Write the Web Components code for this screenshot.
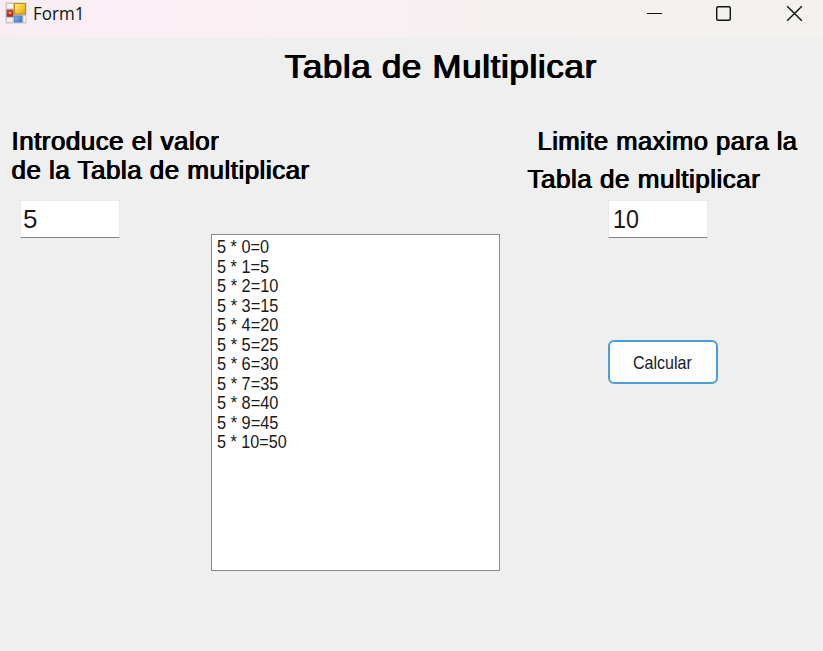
<!DOCTYPE html>
<html lang="es">
<head>
<meta charset="utf-8">
<title>Form1</title>
<style>
html,body{margin:0;height:100%;overflow:hidden;background:#efefef}
</style>
</head>
<body>
<form-window></form-window>
<script>
// One line of text, scaled horizontally to the width given in "w".
class FitText extends HTMLElement{
  connectedCallback(){
    const r=this.attachShadow({mode:'open'});
    r.innerHTML=`<style>:host{display:block;white-space:nowrap}span{display:inline-block;transform-origin:0 0}</style><span><slot></slot></span>`;
    const s=r.querySelector('span');
    const w=+this.getAttribute('w');
    this.style.width=w+'px';
    s.style.transform=`scaleX(${w/s.offsetWidth})`;
  }
}
class TitleBar extends HTMLElement{
  connectedCallback(){
    this.attachShadow({mode:'open'}).innerHTML=`<style>
:host{display:flex;height:38px;background:linear-gradient(90deg,#f7eef4 0%,#faeff4 20%,#f8f0f3 45%,#f4f1ef 75%,#f3f2ee 100%);font:18px/26px "Open Sans","Noto Sans",sans-serif;color:#111}
.icon{width:22px;height:22px;margin:2px 0 0 5px}
fit-text{margin:0 0 0 6px}
.controls{margin-left:auto;width:176px;height:27px}
</style>
<svg class="icon" viewBox="0 0 22 22">
<defs><linearGradient id="y" x1="0" y1="0" x2="1" y2="1"><stop offset="0" stop-color="#fff0a0"/><stop offset=".5" stop-color="#f8ca32"/><stop offset="1" stop-color="#dfa40c"/></linearGradient>
<linearGradient id="r" x1="0" y1="0" x2="0" y2="1"><stop offset="0" stop-color="#d9523f"/><stop offset="1" stop-color="#b01f16"/></linearGradient>
<linearGradient id="b" x1="0" y1="0" x2="1" y2="1"><stop offset="0" stop-color="#80b4f8"/><stop offset="1" stop-color="#3173d4"/></linearGradient></defs>
<rect x=".5" y=".5" width="21" height="21" rx="1" fill="#c6c5c8"/>
<rect x="2" y="2" width="6" height="4.5" fill="#f5f5f6"/><rect x="2" y="16" width="5.5" height="4" fill="#f5f5f6"/><rect x="18.5" y="14" width="2" height="6" fill="#f5f5f6"/>
<rect x="9.5" y="1.5" width="11" height="10.5" fill="url(#y)" stroke="#b98c18"/>
<rect x="2" y="8" width="6" height="6.5" fill="url(#r)" stroke="#a83a30" stroke-width=".8"/><rect x="4" y="10" width="2" height="2" fill="#f0a79d"/>
<rect x="9.5" y="14" width="7.5" height="6" fill="url(#b)" stroke="#4779bd" stroke-width=".8"/>
</svg>
<fit-text w="51">Form1</fit-text>
<svg class="controls" viewBox="647 0 176 27" fill="none" stroke="#111" stroke-width="1.4">
<path d="M647 13.5H662" stroke-width="1"/>
<rect x="716.7" y="6.7" width="13.6" height="13.6" rx="1.5"/>
<path d="M787.2 6.2L801.8 20.8M801.8 6.2L787.2 20.8"/>
</svg>`;
  }
}
class FormLabel extends HTMLElement{
  connectedCallback(){
    this.attachShadow({mode:'open'}).innerHTML=`<style>
:host{display:flex;flex-direction:column;font:25px/29px "Liberation Sans",Arial,sans-serif;letter-spacing:.5px;color:#000;text-shadow:1px 0 0 #000,.5px 0 0 #000}
</style><slot></slot>`;
  }
}
class TextField extends HTMLElement{
  connectedCallback(){
    this.attachShadow({mode:'open'}).innerHTML=`<style>
:host{display:block;box-sizing:border-box;width:100px;height:38px;background:#fff;border:1px solid #e9e9e9;border-bottom:1.5px solid #858585;border-radius:1px;padding:3px 0 0 2px;font:26px/30px "Liberation Sans",Arial,sans-serif;color:#1a1a1a}
</style><slot></slot>`;
  }
}
class ListBox extends HTMLElement{
  connectedCallback(){
    const n=+this.getAttribute('base'),max=+this.getAttribute('max');
    let rows='';
    for(let i=0;i<=max;i++){
      const w=n*i>9?(i>9?70:61):52;
      rows+=`<fit-text w="${w}">${n} * ${i}=${n*i}</fit-text>`;
    }
    this.attachShadow({mode:'open'}).innerHTML=`<style>
:host{display:block;box-sizing:border-box;width:289px;height:337px;border:1.5px solid #858a91;background:#fff;padding:2px 0 0 4.6px;font:18.5px/19.5px "Liberation Sans",Arial,sans-serif;color:#1a1a1a}
fit-text{height:19.5px}
</style>${rows}`;
  }
}
class PushButton extends HTMLElement{
  connectedCallback(){
    this.attachShadow({mode:'open'}).innerHTML=`<style>
:host{display:block}
button{display:flex;align-items:center;justify-content:center;box-sizing:border-box;width:110px;height:44px;margin:0;padding:1px 2px 0 0;border:2px solid #4a9ede;border-radius:6px;background:#fdfdfd;font:18.5px/24px "Liberation Sans",Arial,sans-serif;color:#1a1a2a}
</style><button><slot></slot></button>`;
  }
}
class FormWindow extends HTMLElement{
  connectedCallback(){
    this.attachShadow({mode:'open'}).innerHTML=`<style>
:host{display:flex;flex-direction:column;width:823px;height:651px;background:#efefef}
.title{font:32.5px/40px "Liberation Sans",Arial,sans-serif;letter-spacing:.6px;color:#000;text-shadow:.6px 0 0 #000,1.2px 0 0 #000;padding:9px 0 0 284px}
.labels{display:flex;justify-content:space-between;padding:40px 26px 0 11px;height:73px;box-sizing:content-box}
.right{gap:8.5px}
.fields{display:grid;grid-template-columns:211px 290px 1fr}
.left{padding-left:20px}
list-box{margin-top:34px}
.side{display:flex;flex-direction:column;gap:102px;padding-left:107px}
</style>
<title-bar></title-bar>
<div class="title"><fit-text w="312">Tabla de Multiplicar</fit-text></div>
<div class="labels">
<form-label><fit-text w="208">Introduce el valor</fit-text><fit-text w="298.5">de la Tabla de multiplicar</fit-text></form-label>
<form-label class="right"><fit-text w="260" style="margin-left:10px">Limite maximo para la</fit-text><fit-text w="233">Tabla de multiplicar</fit-text></form-label>
</div>
<div class="fields">
<div class="left"><text-field><fit-text w="14">5</fit-text></text-field></div>
<list-box base="5" max="10"></list-box>
<div class="side"><text-field><fit-text w="26" style="margin-left:2px">10</fit-text></text-field><push-button><fit-text w="59">Calcular</fit-text></push-button></div>
</div>`;
  }
}
customElements.define('fit-text',FitText);
customElements.define('title-bar',TitleBar);
customElements.define('form-label',FormLabel);
customElements.define('text-field',TextField);
customElements.define('list-box',ListBox);
customElements.define('push-button',PushButton);
customElements.define('form-window',FormWindow);
</script>
</body>
</html>
